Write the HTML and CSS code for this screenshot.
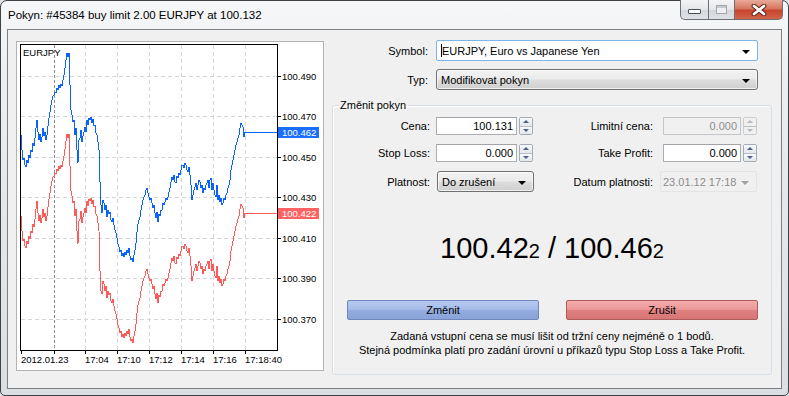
FILE: index.html
```html
<!DOCTYPE html>
<html lang="cs">
<head>
<meta charset="utf-8">
<title>Pokyn</title>
<link rel="stylesheet" href="styles.css">
</head>
<body>
<div class="window">
  <div class="titlebar">
    <div class="title">Pokyn: #45384 buy limit 2.00 EURJPY at 100.132</div>
    <div class="caption-btns">
      <div class="cbtn cmin"><span class="bar"></span></div>
      <div class="cbtn cmax"><span class="box"></span></div>
      <div class="cbtn cclose">
        <svg width="16" height="12" viewBox="0 0 16 12">
          <path d="M3 2 L13 10 M13 2 L3 10" stroke="#5a2418" stroke-width="4.8" stroke-linecap="round"/>
          <path d="M3 2 L13 10 M13 2 L3 10" stroke="#ffffff" stroke-width="2.8" stroke-linecap="round"/>
        </svg>
      </div>
    </div>
  </div>
  <div class="client">
    <div class="chart-panel">
      <svg class="chart" width="306" height="328" viewBox="17 42 306 328">
        <g class="grid">
          <line x1="21" y1="76.5" x2="277" y2="76.5"/>
          <line x1="21" y1="116.5" x2="277" y2="116.5"/>
          <line x1="21" y1="157.5" x2="277" y2="157.5"/>
          <line x1="21" y1="197.5" x2="277" y2="197.5"/>
          <line x1="21" y1="238.5" x2="277" y2="238.5"/>
          <line x1="21" y1="278.5" x2="277" y2="278.5"/>
          <line x1="21" y1="319.5" x2="277" y2="319.5"/>
          <line x1="85.5" y1="45" x2="85.5" y2="350"/>
          <line x1="117.5" y1="45" x2="117.5" y2="350"/>
          <line x1="149.5" y1="45" x2="149.5" y2="350"/>
          <line x1="181.5" y1="45" x2="181.5" y2="350"/>
          <line x1="213.5" y1="45" x2="213.5" y2="350"/>
          <line x1="245.5" y1="45" x2="245.5" y2="350"/>
        </g>
        <line class="sep" x1="54.5" y1="45" x2="54.5" y2="350"/>
        <polyline class="line bid" transform="translate(0,81)" points="21,135 22,150 23,160 24,158 25,165 26,167 27,160 28,163 29,155 30,158 31,150 32,152 33,143 34,146 35,138 36,128 37,120 38,132 39,140 40,134 41,142 42,137 43,128 44,136 45,132 46,140 47,135 48,126 49,118 50,112 51,105 52,100 53,96 54,95 55,92 56,93 57,88 58,90 59,85 60,88 61,84 62,86 63,80 64,75 65,68 66,60 67,53 68,57 69,53 70,85 71,110 72,115 73,122 74,120 75,135 76,128 77,150 78,163 79,140 80,138 81,130 82,142 83,136 84,132 85,127 86,132 87,120 88,125 89,118 90,120 91,117 92,123 93,119 94,126 95,125 96,133 97,135 98,142 99,150 100,190 101,210 102,213 103,200 104,203 105,210 106,205 107,217 108,210 109,214 110,212 111,220 112,222 113,218 114,225 115,230 116,233 117,238 118,244 119,247 120,252 121,250 122,256 123,253 124,257 125,252 126,255 127,250 128,253 129,248 130,256 131,260 132,258 133,262 134,255 135,250 136,243 137,232 138,224 139,220 140,217 141,210 142,205 143,200 144,197 145,195 146,190 147,188 148,193 149,197 150,200 151,198 152,203 153,208 154,205 155,213 156,218 157,212 158,222 159,214 160,216 161,210 162,210 163,203 164,205 165,202 166,198 167,200 168,197 169,192 170,188 171,182 172,177 173,180 174,175 175,182 176,183 177,176 178,178 179,173 180,175 181,170 182,165 183,165 184,168 185,163 186,165 187,170 188,172 189,167 190,175 191,185 192,200 193,195 194,190 195,187 196,183 197,190 198,185 199,180 200,182 201,188 202,185 203,193 204,188 205,190 206,185 207,183 208,180 209,188 210,180 211,178 212,190 213,183 214,190 215,195 216,197 217,185 218,200 219,195 220,202 221,198 222,205 223,203 224,198 225,200 226,195 227,193 228,188 229,185 230,180 231,170 232,165 233,160 234,155 235,150 236,145 237,142 238,138 239,135 240,128 241,123 242,125 243,127 244,137 245,132 278,132"/>
        <polyline class="line ask" points="21,135 22,150 23,160 24,158 25,165 26,167 27,160 28,163 29,155 30,158 31,150 32,152 33,143 34,146 35,138 36,128 37,120 38,132 39,140 40,134 41,142 42,137 43,128 44,136 45,132 46,140 47,135 48,126 49,118 50,112 51,105 52,100 53,96 54,95 55,92 56,93 57,88 58,90 59,85 60,88 61,84 62,86 63,80 64,75 65,68 66,60 67,53 68,57 69,53 70,85 71,110 72,115 73,122 74,120 75,135 76,128 77,150 78,163 79,140 80,138 81,130 82,142 83,136 84,132 85,127 86,132 87,120 88,125 89,118 90,120 91,117 92,123 93,119 94,126 95,125 96,133 97,135 98,142 99,150 100,182 101,205 102,213 103,200 104,203 105,210 106,205 107,217 108,210 109,214 110,212 111,220 112,222 113,218 114,225 115,230 116,233 117,238 118,244 119,247 120,252 121,250 122,256 123,253 124,257 125,252 126,255 127,250 128,253 129,248 130,256 131,260 132,258 133,262 134,255 135,250 136,243 137,232 138,224 139,220 140,217 141,210 142,205 143,200 144,197 145,195 146,190 147,188 148,193 149,197 150,200 151,198 152,203 153,208 154,205 155,213 156,218 157,212 158,222 159,214 160,216 161,210 162,210 163,203 164,205 165,202 166,198 167,200 168,197 169,192 170,188 171,182 172,177 173,180 174,175 175,182 176,183 177,176 178,178 179,173 180,175 181,170 182,165 183,165 184,168 185,163 186,165 187,170 188,172 189,167 190,175 191,185 192,200 193,195 194,190 195,187 196,183 197,190 198,185 199,180 200,182 201,188 202,185 203,193 204,188 205,190 206,185 207,183 208,180 209,188 210,180 211,178 212,190 213,183 214,190 215,195 216,197 217,185 218,200 219,195 220,202 221,198 222,205 223,203 224,198 225,200 226,195 227,193 228,188 229,185 230,180 231,170 232,165 233,160 234,155 235,150 236,145 237,142 238,138 239,135 240,128 241,123 242,125 243,127 244,137 245,132 278,132"/>
        <rect class="frame" x="20.5" y="44.5" width="257" height="306"/>
        <g class="ticks">
          <line x1="277" y1="76.5" x2="281" y2="76.5"/>
          <line x1="277" y1="116.5" x2="281" y2="116.5"/>
          <line x1="277" y1="157.5" x2="281" y2="157.5"/>
          <line x1="277" y1="197.5" x2="281" y2="197.5"/>
          <line x1="277" y1="238.5" x2="281" y2="238.5"/>
          <line x1="277" y1="278.5" x2="281" y2="278.5"/>
          <line x1="277" y1="319.5" x2="281" y2="319.5"/>
          <line x1="21.5" y1="350" x2="21.5" y2="354"/>
          <line x1="54.5" y1="350" x2="54.5" y2="354"/>
          <line x1="85.5" y1="350" x2="85.5" y2="354"/>
          <line x1="117.5" y1="350" x2="117.5" y2="354"/>
          <line x1="149.5" y1="350" x2="149.5" y2="354"/>
          <line x1="181.5" y1="350" x2="181.5" y2="354"/>
          <line x1="213.5" y1="350" x2="213.5" y2="354"/>
          <line x1="245.5" y1="350" x2="245.5" y2="354"/>
        </g>
        <g class="labels">
          <text x="23" y="56">EURJPY</text>
          <text x="282" y="80">100.490</text>
          <text x="282" y="120">100.470</text>
          <text x="282" y="161">100.450</text>
          <text x="282" y="201">100.430</text>
          <text x="282" y="242">100.410</text>
          <text x="282" y="282">100.390</text>
          <text x="282" y="323">100.370</text>
          <text x="21" y="363">2012.01.23</text>
          <text x="85" y="363">17:04</text>
          <text x="117" y="363">17:10</text>
          <text x="149" y="363">17:12</text>
          <text x="181" y="363">17:14</text>
          <text x="213" y="363">17:16</text>
          <text x="245" y="363">17:18:40</text>
        </g>
        <rect class="tag-ask" x="278" y="127" width="41" height="11"/>
        <text class="tag-text" x="282" y="136">100.462</text>
        <rect class="tag-bid" x="278" y="208" width="41" height="11"/>
        <text class="tag-text" x="282" y="217">100.422</text>
      </svg>
    </div>

    <div class="form">
      <div class="toprows">
        <label class="lbl">Symbol:</label>
        <div class="combo combo-edit"><span class="caret"></span><span class="ctext">EURJPY, Euro vs Japanese Yen</span><span class="arrow"></span></div>
        <label class="lbl">Typ:</label>
        <div class="combo combo-btn"><span class="ctext">Modifikovat pokyn</span><span class="arrow"></span></div>
      </div>

      <fieldset class="group">
        <legend>Změnit pokyn</legend>
        <div class="fields">
          <label class="flbl">Cena:</label>
          <div class="numgroup"><div class="num">100.131</div><div class="spin"><span class="up"></span><span class="down"></span></div></div>
          <label class="flbl">Limitní cena:</label>
          <div class="numgroup right"><div class="num disabled">0.000</div><div class="spin disabled"><span class="up"></span><span class="down"></span></div></div>

          <label class="flbl">Stop Loss:</label>
          <div class="numgroup"><div class="num">0.000</div><div class="spin"><span class="up"></span><span class="down"></span></div></div>
          <label class="flbl">Take Profit:</label>
          <div class="numgroup right"><div class="num">0.000</div><div class="spin"><span class="up"></span><span class="down"></span></div></div>

          <label class="flbl">Platnost:</label>
          <div class="combo combo-btn small"><span class="ctext">Do zrušení</span><span class="arrow"></span></div>
          <label class="flbl">Datum platnosti:</label>
          <div class="combo combo-dis"><span class="ctext">23.01.12 17:18</span><span class="arrow"></span></div>
        </div>

        <div class="price">100.42<span class="pip">2</span> / 100.46<span class="pip">2</span></div>

        <div class="buttons">
          <div class="btn btn-blue">Změnit</div>
          <div class="btn btn-red">Zrušit</div>
        </div>

        <div class="note">Zadaná vstupní cena se musí lišit od tržní ceny nejméně o 1 bodů.<br>Stejná podmínka platí pro zadání úrovní u příkazů typu Stop Loss a Take Profit.</div>
      </fieldset>
    </div>
  </div>
</div>
</body>
</html>
```

FILE: styles.css
```css
* { box-sizing: border-box; }

html, body {
  margin: 0;
  padding: 0;
  background: #dfe2e5;
}

body {
  width: 789px;
  height: 396px;
  overflow: hidden;
  font-family: "Liberation Sans", Arial, sans-serif;
  font-size: 11px;
  color: #000;
}

.window {
  width: 789px;
  height: 396px;
  border: 1px solid #3e4247;
  border-radius: 7px 7px 5px 5px;
  background: linear-gradient(180deg, #f6f7f8 0%, #eceeef 20%, #e3e5e8 60%, #dcdfe2 100%);
  display: flex;
  flex-direction: column;
}

/* ---------- title bar ---------- */
.titlebar {
  height: 28px;
  display: flex;
  align-items: flex-start;
}

.title {
  padding: 7px 0 0 7px;
  font-size: 11.5px;
  line-height: 14px;
  color: #000;
  flex: 1;
}

.caption-btns {
  display: flex;
  margin-right: 5px;
  margin-top: -1px;
}

.cbtn {
  height: 20px;
  display: flex;
  align-items: center;
  justify-content: center;
  border: 1px solid #6c7076;
  border-top: none;
}

.cmin {
  width: 28px;
  border-radius: 0 0 0 5px;
  border-right: none;
  background: linear-gradient(180deg, #f3f4f5 0%, #e4e6e8 50%, #d3d6da 51%, #dfe2e5 100%);
}
.cmax {
  width: 27px;
  background: linear-gradient(180deg, #f3f4f5 0%, #e4e6e8 50%, #d3d6da 51%, #dfe2e5 100%);
}
.cclose {
  width: 48px;
  border-left: none;
  border-radius: 0 0 5px 0;
  background: linear-gradient(180deg, #e9a999 0%, #d8775f 45%, #c6452c 55%, #d2654b 100%);
}

.cmin .bar {
  width: 13px;
  height: 5px;
  margin-top: 4px;
  background: #fff;
  border: 1px solid #4a4f56;
  border-radius: 1px;
}
.cmax .box {
  width: 11px;
  height: 9px;
  border: 1px solid #a2a6ab;
  background: #eef0f2;
  box-shadow: inset 0 2px 0 #c6c9cd;
}

/* ---------- client ---------- */
.client {
  margin-left: 6px;
  width: 775px;
  height: 360px;
  border: 1px solid #7c8086;
  background: #f0f0f0;
  display: flex;
  align-items: flex-start;
  padding: 11px 0 0 8px;
}

.chart-panel {
  width: 308px;
  height: 330px;
  border: 1px solid #b3b3b3;
  background: #fff;
  flex: none;
}

.chart { display: block; }
.chart .grid line {
  stroke: #d6d6d6;
  stroke-width: 1;
  stroke-dasharray: 4 3;
}
.chart .sep {
  stroke: #8c8c8c;
  stroke-width: 1;
  stroke-dasharray: 3 2;
}
.chart .line {
  fill: none;
  stroke-width: 1;
  shape-rendering: crispEdges;
}
.chart .ask { stroke: #0a62ff; }
.chart .bid { stroke: #ff5a5a; }
.chart .frame { fill: none; stroke: #000; stroke-width: 1; }
.chart .ticks line { stroke: #000; stroke-width: 1; }
.chart text {
  font-family: "Liberation Sans", Arial, sans-serif;
  font-size: 9.5px;
  fill: #000;
}
.chart .tag-ask { fill: #1a6dff; }
.chart .tag-bid { fill: #ff6262; }
.chart .tag-text { fill: #fff; }

/* ---------- form ---------- */
.form {
  margin-left: 8px;
  margin-top: -1px;
  width: 440px;
  flex: none;
}

.toprows {
  display: grid;
  grid-template-columns: 96px 322px;
  column-gap: 8px;
  row-gap: 8px;
  grid-auto-rows: 21px;
}

.lbl, .flbl {
  display: flex;
  align-items: center;
  justify-content: flex-end;
  white-space: nowrap;
}

.combo {
  display: flex;
  align-items: center;
  height: 21px;
  padding-left: 4px;
}
.combo .ctext { flex: 1; white-space: nowrap; }
.combo .arrow {
  width: 0;
  height: 0;
  border-left: 4px solid transparent;
  border-right: 4px solid transparent;
  border-top: 4px solid #000;
  margin-right: 7px;
  margin-top: 2px;
}
.combo-edit {
  background: #fff;
  border: 1px solid #7eb4ea;
  border-radius: 2px;
}
.combo-edit .caret {
  width: 1px;
  height: 13px;
  background: #000;
}
.combo-btn {
  border: 1px solid #707070;
  border-radius: 3px;
  background: linear-gradient(180deg, #f2f2f2 0%, #ebebeb 48%, #dddddd 52%, #cfcfcf 100%);
  box-shadow: inset 0 0 0 1px rgba(255,255,255,0.7);
}
.combo-btn.small { width: 97px; margin-left: 1px; }
.combo-dis {
  width: 97px;
  margin-left: -3px;
  border: 1px solid #e4e4e4;
  border-radius: 2px;
  padding-left: 2px;
  color: #8d8d8d;
}
.combo-dis .arrow { border-top-color: #a0a0a0; }

.group {
  margin: 9px 0 0 0;
  padding: 0 0 17px 0;
  width: 440px;
  min-width: 0;
  border: 1px solid #d5dfe5;
  border-radius: 3px;
  box-shadow: inset 1px 1px 0 #fff;
}
.group legend {
  margin-left: 6px;
  padding: 0 2px 0 1px;
  line-height: 13px;
  font-size: 11px;
}

.fields {
  margin-top: 5px;
  display: grid;
  grid-template-columns: 103px 97px 130px 96px;
  grid-template-rows: 18px 18px 21px;
  row-gap: 9px;
}
.fields .flbl { padding-right: 6px; }
.fields .flbl:nth-child(4n+3) { padding-right: 10px; }

.numgroup {
  display: flex;
  gap: 2px;
}
.num {
  width: 81px;
  height: 18px;
  border: 1px solid #abadb3;
  border-top-color: #a0a3aa;
  background: #fff;
  text-align: right;
  padding-right: 3px;
  line-height: 16px;
}
.numgroup.right .num { width: 78px; }
.num.disabled {
  background: #f0f0f0;
  border-color: #c3c5c8;
  color: #8d8d8d;
}

.spin {
  width: 14px;
  height: 18px;
  border: 1px solid #a6acb5;
  border-radius: 2px;
  display: flex;
  flex-direction: column;
  background: #f4f5f7;
}
.spin span {
  flex: 1;
  display: flex;
  align-items: center;
  justify-content: center;
  background: linear-gradient(180deg, #f6f7f9, #e3e7ec);
}
.spin .up { border-bottom: 1px solid #b9c0c8; }
.spin .up::after {
  content: "";
  border-left: 3px solid transparent;
  border-right: 3px solid transparent;
  border-bottom: 3px solid #4d6185;
}
.spin .down::after {
  content: "";
  border-left: 3px solid transparent;
  border-right: 3px solid transparent;
  border-top: 3px solid #4d6185;
}
.spin.disabled { border-color: #c9cdd2; }
.spin.disabled span { background: #f0f0f0; }
.spin.disabled .up::after { border-bottom-color: #b5b8bc; }
.spin.disabled .down::after { border-top-color: #b5b8bc; }

.price {
  margin-top: 36px;
  text-align: center;
  font-size: 29px;
  line-height: 40px;
  color: #000;
}
.price .pip { font-size: 20px; }

.buttons {
  margin-top: 29px;
  display: flex;
  gap: 27px;
  padding: 0 13px 0 14px;
}
.btn {
  flex: 1;
  height: 20px;
  display: flex;
  align-items: center;
  justify-content: center;
  border-radius: 2px;
  color: #000;
}
.btn-blue {
  border: 1px solid #6f87b9;
  background: linear-gradient(180deg, #b6caf0 0%, #a4bbe8 48%, #93acdf 52%, #8aa4d9 100%);
}
.btn-red {
  border: 1px solid #ab5d5d;
  background: linear-gradient(180deg, #f5abab 0%, #ec9797 48%, #df8080 52%, #d97676 100%);
}

.note {
  margin-top: 9px;
  text-align: center;
  line-height: 14px;
  color: #000;
}
```
